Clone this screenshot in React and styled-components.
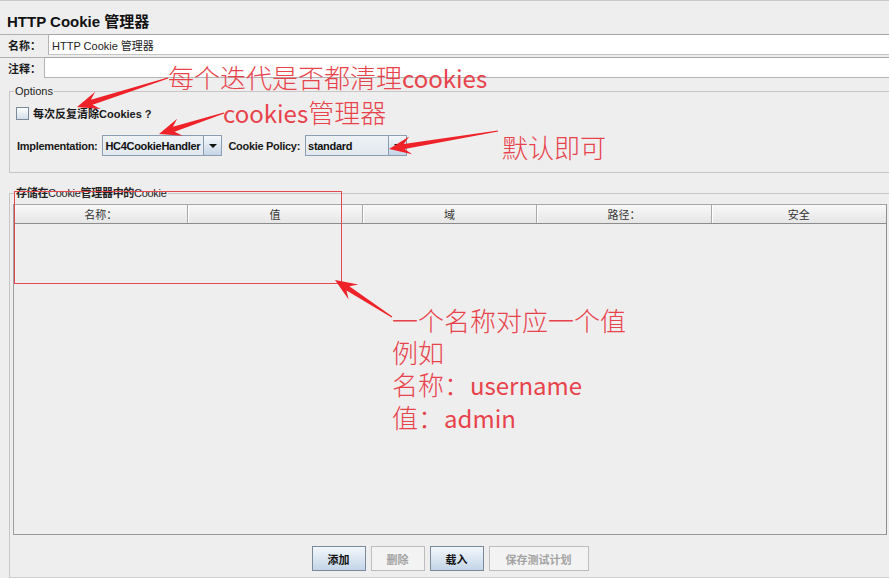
import React from 'react'
import styled, { createGlobalStyle } from 'styled-components'

const GlobalStyle = createGlobalStyle`
  html, body { margin: 0; padding: 0; background: #eeeeee; }
  body { font-family: "Liberation Sans", "Noto Sans CJK SC", sans-serif; }
`

const Page = styled.div`
  position: relative;
  width: 889px;
  height: 578px;
  overflow: hidden;
  box-sizing: border-box;
  border-top: 1px solid #c9c9c9;
  background: #eeeeee;
  display: flex;
  flex-direction: column;
  font-size: 11px;
  color: #1a1a1a;
`

const Title = styled.div`
  height: 27px;
  padding: 6px 0 0 7px;
  display: flex;
  align-items: center;
  font-size: 15px;
  font-weight: bold;
  color: #111;
`

const FieldRow = styled.div`
  display: flex;
  height: 21px;
  margin-top: ${p => p.$mt || 0}px;
`

const FieldLabel = styled.label`
  width: ${p => p.$w}px;
  box-sizing: border-box;
  padding-left: 8px;
  display: flex;
  align-items: center;
  font-weight: bold;
  border-top: 1px solid #b0b0b0;
`

const FieldInput = styled.div`
  flex: 1;
  background: #fff;
  border-top: 1px solid #a5a5a5;
  border-left: 1px solid #b3b3b3;
  border-bottom: 1px solid ${p => p.$bottom || '#c4c4c4'};
  padding-left: 3px;
  display: flex;
  align-items: center;
  color: #222;
`

const Group = styled.fieldset`
  margin: ${p => p.$mt}px 0 0 9px;
  padding: ${p => p.$pad};
  border: 1px solid #c6c6c6;
  border-right: none;
  min-width: 0;
  ${p => p.$grow && 'flex: 1; min-height: 0; display: flex; flex-direction: column; border-bottom-color: #cfcfcf;'}
`

const Legend = styled.legend`
  margin-left: ${p => p.$ml}px;
  padding: 0 1px;
  font-size: 11px;
  line-height: 13px;
  color: #222;
  font-weight: ${p => (p.$bold ? 'bold' : 'normal')};
  letter-spacing: ${p => (p.$bold ? '-0.3px' : '0')};
`

const Plain = styled.span`
  font-weight: normal;
`

const CheckRow = styled.div`
  display: flex;
  align-items: center;
  gap: 4px;
  height: 14px;
  padding-left: 6px;
  font-weight: bold;
`

const CheckBox = styled.span`
  width: 11px;
  height: 11px;
  border: 1px solid #7a8a99;
  background: linear-gradient(#ffffff, #d3dde8);
`

const ComboRow = styled.div`
  display: flex;
  align-items: center;
  gap: 5px;
  margin-top: 15px;
  padding-left: 7px;
  font-weight: bold;
  letter-spacing: -0.3px;
`

const Combo = styled.div`
  display: flex;
  width: ${p => p.$w}px;
  height: 21px;
  box-sizing: border-box;
  border: 1px solid #8a9db1;
  margin-right: 1px;
`

const ComboField = styled.div`
  flex: 1;
  display: flex;
  align-items: center;
  padding-left: 2px;
  background: linear-gradient(#eef2f6, #e1e8ef);
  color: #111;
  overflow: hidden;
  white-space: nowrap;
`

const ComboArrow = styled.div`
  width: 17px;
  flex: none;
  border-left: 1px solid #8a9db1;
  background: linear-gradient(#f5f8fb, #c6d6e6);
  display: flex;
  align-items: center;
  justify-content: center;
  &::after {
    content: '';
    border-left: 4px solid transparent;
    border-right: 4px solid transparent;
    border-top: 4px solid #111;
  }
`

const Table = styled.div`
  flex: 1;
  display: flex;
  flex-direction: column;
  border-left: 1px solid #9d9d9d;
  border-right: 1px solid #8f8f8f;
  border-bottom: 1px solid #999;
`

const HeaderRow = styled.div`
  display: grid;
  grid-template-columns: repeat(5, 1fr);
  height: 20px;
  box-sizing: border-box;
  border-top: 1px solid #a6a6a6;
  border-bottom: 1px solid #8c8c8c;
  background: linear-gradient(#f8f8f8, #e6e6e6);
`

const HeaderCell = styled.div`
  display: flex;
  align-items: center;
  justify-content: center;
  border-right: 1px solid #a9a9a9;
  box-shadow: inset 1px 0 0 #ffffff;
  color: #333;
  &:last-child { border-right: none; }
`

const TableBody = styled.div`
  flex: 1;
  background: #eeeeee;
`

const ButtonBar = styled.div`
  display: flex;
  justify-content: center;
  gap: 5px;
  padding: 11px 0 6px;
`

const Button = styled.button`
  width: ${p => p.$w}px;
  height: 25px;
  padding: 0;
  font-family: "Liberation Sans", "Noto Sans CJK SC", sans-serif;
  font-size: 11px;
  font-weight: bold;
  border: 1px solid ${p => (p.disabled ? '#bdbdbd' : '#7a8a99')};
  color: ${p => (p.disabled ? '#a3a3a3' : '#111')};
  background: ${p => (p.disabled ? '#f3f3f3' : 'linear-gradient(#f3f7fb, #c3d5e8)')};
`

const Note = styled.div`
  position: absolute;
  left: ${p => p.$x}px;
  top: ${p => p.$y}px;
  font-family: "Noto Sans CJK SC", sans-serif;
  font-size: 26px;
  line-height: 32px;
  font-weight: 300;
  color: #e8434b;
  white-space: nowrap;
`

const Latin = styled.span`
  font-size: 24px;
  font-weight: 400;
`

const Frame = styled.div`
  position: absolute;
  left: 14px;
  top: 190px;
  width: 326px;
  height: 91px;
  border: 1px solid #e5484d;
`

const Overlay = styled.svg`
  position: absolute;
  left: 0;
  top: 0;
  pointer-events: none;
`

const arrow = (x1, y1, x2, y2) => {
  const len = Math.hypot(x2 - x1, y2 - y1)
  const ux = (x2 - x1) / len
  const uy = (y2 - y1) / len
  const nx = -uy
  const ny = ux
  const hl = 22
  const hw = 9
  const neck = [x2 - ux * hl * 0.7, y2 - uy * hl * 0.7]
  const base = [x2 - ux * hl, y2 - uy * hl]
  const pts = [
    [x1 + nx * 0.6, y1 + ny * 0.6],
    [neck[0] + nx * 2.6, neck[1] + ny * 2.6],
    [base[0] + nx * hw, base[1] + ny * hw],
    [x2, y2],
    [base[0] - nx * hw, base[1] - ny * hw],
    [neck[0] - nx * 2.6, neck[1] - ny * 2.6],
    [x1 - nx * 0.6, y1 - ny * 0.6],
  ]
  return pts.map(p => p.map(v => v.toFixed(1)).join(',')).join(' ')
}

const arrows = [
  [168, 77, 77, 106],
  [224, 112, 159, 133],
  [498, 130, 389, 148],
  [392, 316, 335, 279],
]

const columns = ['名称：', '值', '域', '路径：', '安全']

export default function App() {
  return (
    <>
      <GlobalStyle />
      <Page>
        <Title>HTTP Cookie 管理器</Title>
        <FieldRow>
          <FieldLabel $w={48}>名称：</FieldLabel>
          <FieldInput>HTTP Cookie 管理器</FieldInput>
        </FieldRow>
        <FieldRow $mt={2}>
          <FieldLabel $w={44}>注释：</FieldLabel>
          <FieldInput $bottom="#b4b4b4" />
        </FieldRow>

        <Group $mt={7} $pad="8px 0 16px 0">
          <Legend $ml={4}>Options</Legend>
          <CheckRow>
            <CheckBox />
            每次反复清除Cookies ?
          </CheckRow>
          <ComboRow>
            Implementation:
            <Combo $w={120}>
              <ComboField>HC4CookieHandler</ComboField>
              <ComboArrow />
            </Combo>
            Cookie Policy:
            <Combo $w={102}>
              <ComboField>standard</ComboField>
              <ComboArrow />
            </Combo>
          </ComboRow>
        </Group>

        <Group $mt={14} $pad="4px 2px 0 3px" $grow>
          <Legend $ml={2} $bold>
            存储在<Plain>Cookie</Plain>管理器中的<Plain>Cookie</Plain>
          </Legend>
          <Table>
            <HeaderRow>
              {columns.map(c => (
                <HeaderCell key={c}>{c}</HeaderCell>
              ))}
            </HeaderRow>
            <TableBody />
          </Table>
          <ButtonBar>
            <Button $w={54}>添加</Button>
            <Button $w={54} disabled>删除</Button>
            <Button $w={54}>载入</Button>
            <Button $w={100} disabled>保存测试计划</Button>
          </ButtonBar>
        </Group>

        <Frame />
        <Note $x={168} $y={60}>每个迭代是否都清理<Latin>cookies</Latin></Note>
        <Note $x={223} $y={95}><Latin>cookies</Latin>管理器</Note>
        <Note $x={502} $y={130}>默认即可</Note>
        <Note $x={392} $y={303}>
          <div>一个名称对应一个值</div>
          <div>例如</div>
          <div>名称：<Latin>username</Latin></div>
          <div>值：<Latin>admin</Latin></div>
        </Note>
        <Overlay width="889" height="578" viewBox="0 0 889 578">
          {arrows.map((a, i) => (
            <polygon key={i} points={arrow(...a)} fill="#ee2228" />
          ))}
        </Overlay>
      </Page>
    </>
  )
}
